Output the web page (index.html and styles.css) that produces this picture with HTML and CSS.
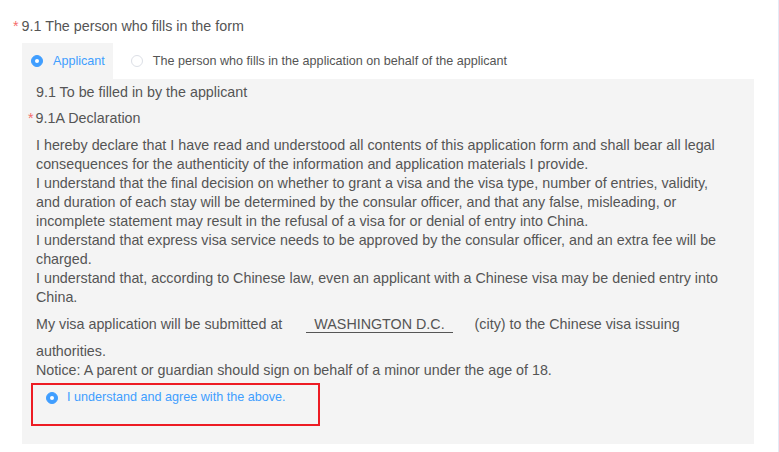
FILE: index.html
```
<!DOCTYPE html>
<html lang="en">
<head>
  <meta charset="UTF-8" />
  <meta name="viewport" content="width=device-width, initial-scale=1.0"/>
  <title>Visa Application - 9.1</title>
  <link rel="stylesheet" href="styles.css">
</head>
<body>
  <div class="page">
    <div class="field-title"><span class="req">*</span>9.1 The person who fills in the form</div>

    <div class="tabs">
      <div class="tab active">
        <span class="radio checked"></span>
        <span class="tab-label">Applicant</span>
      </div>
      <div class="tab">
        <span class="radio"></span>
        <span class="tab-label">The person who fills in the application on behalf of the applicant</span>
      </div>
    </div>

    <div class="panel">
      <div class="sub-title">9.1 To be filled in by the applicant</div>
      <div class="decl-title"><span class="req">*</span>9.1A Declaration</div>

      <div class="decl-text">
        <p>I hereby declare that I have read and understood all contents of this application form and shall bear all legal consequences for the authenticity of the information and application materials I provide.</p>
        <p>I understand that the final decision on whether to grant a visa and the visa type, number of entries, validity, and duration of each stay will be determined by the consular officer, and that any false, misleading, or incomplete statement may result in the refusal of a visa for or denial of entry into China.</p>
        <p>I understand that express visa service needs to be approved by the consular officer, and an extra fee will be charged.</p>
        <p>I understand that, according to Chinese law, even an applicant with a Chinese visa may be denied entry into China.</p>
        <p class="submit-line">My visa application will be submitted at<span class="city">WASHINGTON D.C.</span>(city) to the Chinese visa issuing authorities.</p>
        <p>Notice: A parent or guardian should sign on behalf of a minor under the age of 18.</p>
      </div>

      <div class="agree">
        <span class="radio checked"></span>
        <span class="agree-label">I understand and agree with the above.</span>
      </div>
    </div>
  </div>
</body>
</html>
```
FILE: styles.css
```
body {
  margin: 0;
  font-family: "Liberation Sans", Arial, sans-serif;
  background: #fff;
  color: #555;
}
.page {
  box-sizing: border-box;
  width: 779px;
  min-height: 452px;
  padding-top: 17px;
  border-right: 1px solid #e4e9f5;
}
.req {
  color: #f56c6c;
  margin-right: 3px;
}
.field-title {
  font-size: 14.3px;
  line-height: 19px;
  padding-left: 13px;
}

/* tabs */
.tabs {
  display: flex;
  margin: 7px 0 0 22px;
  height: 36px;
}
.tab {
  display: flex;
  align-items: center;
  padding: 0 8px 0 9px;
  font-size: 12.6px;
  color: #555;
}
.tab.active {
  background: #f4f4f4;
}
.tab.active .tab-label {
  color: #409eff;
}
.tab-label {
  margin-left: 10px;
}
.tab + .tab {
  padding-left: 18px;
}

.radio {
  box-sizing: border-box;
  position: relative;
  display: inline-block;
  width: 12px;
  height: 12px;
  border-radius: 50%;
  border: 1px solid #dcdfe6;
  background: #fff;
  flex-shrink: 0;
}
.radio.checked {
  border-color: #409eff;
  background: #409eff;
}
.radio.checked::after {
  content: '';
  position: absolute;
  left: 50%;
  top: 50%;
  width: 4px;
  height: 4px;
  margin: -2px 0 0 -2px;
  border-radius: 50%;
  background: #fff;
}

/* panel */
.panel {
  background: #f4f4f4;
  margin: 0 24px 0 22px;
  padding: 4px 24px 18px 14px;
  font-size: 14.3px;
  line-height: 19px;
}
.decl-title {
  margin: 7px 0 0 -8px;
}
.decl-title .req {
  margin-right: 2px;
}
.decl-text {
  margin-top: 8px;
}
.decl-text p {
  margin: 0;
}
.city {
  display: inline-block;
  line-height: 15px;
  padding: 0 8px;
  margin: 10px 22px 9px 24px;
  border-bottom: 1px solid #555;
}

.agree {
  box-sizing: border-box;
  display: flex;
  align-items: center;
  height: 43px;
  width: 289px;
  margin: 3px 0 0 -5px;
  padding: 0 0 14px 13px;
  border: 2px solid #ed1c24;
  font-size: 12.6px;
}
.agree-label {
  margin-left: 9px;
  color: #409eff;
}
```
